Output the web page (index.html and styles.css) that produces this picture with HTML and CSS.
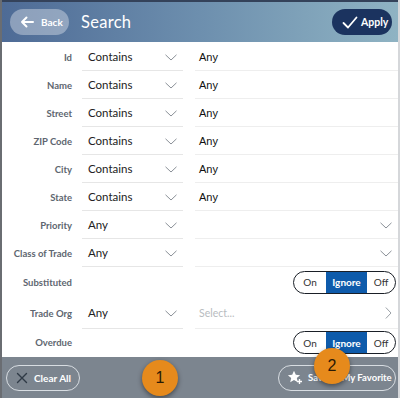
FILE: index.html
```html
<!DOCTYPE html>
<html>
<head>
<meta charset="utf-8">
<link rel="stylesheet" href="styles.css">
</head>
<body>
<div class="app">
  <header class="topbar">
    <button class="back">
      <svg width="14" height="12" viewBox="0 0 14 12"><path d="M13 6H2M6.5 1.5L2 6l4.5 4.5" fill="none" stroke="#fff" stroke-width="2" stroke-linecap="round" stroke-linejoin="round"/></svg>
      <span>Back</span>
    </button>
    <h1 class="title">Search</h1>
    <button class="apply">
      <svg width="16" height="13" viewBox="0 0 16 13"><path d="M1.5 7l4.5 4.5L14.5 1.5" fill="none" stroke="#fff" stroke-width="1.8" stroke-linecap="round" stroke-linejoin="round"/></svg>
      <span>Apply</span>
    </button>
  </header>

  <main class="form">
    <div class="row"><label>Id</label><div class="sel">Contains<svg class="chev" viewBox="0 0 12 7"><path d="M0.5 0.8L6 6 11.5 0.8"/></svg></div><div class="val">Any</div></div>
    <div class="row"><label>Name</label><div class="sel">Contains<svg class="chev" viewBox="0 0 12 7"><path d="M0.5 0.8L6 6 11.5 0.8"/></svg></div><div class="val">Any</div></div>
    <div class="row"><label>Street</label><div class="sel">Contains<svg class="chev" viewBox="0 0 12 7"><path d="M0.5 0.8L6 6 11.5 0.8"/></svg></div><div class="val">Any</div></div>
    <div class="row"><label>ZIP Code</label><div class="sel">Contains<svg class="chev" viewBox="0 0 12 7"><path d="M0.5 0.8L6 6 11.5 0.8"/></svg></div><div class="val">Any</div></div>
    <div class="row"><label>City</label><div class="sel">Contains<svg class="chev" viewBox="0 0 12 7"><path d="M0.5 0.8L6 6 11.5 0.8"/></svg></div><div class="val">Any</div></div>
    <div class="row"><label>State</label><div class="sel">Contains<svg class="chev" viewBox="0 0 12 7"><path d="M0.5 0.8L6 6 11.5 0.8"/></svg></div><div class="val">Any</div></div>
    <div class="row"><label>Priority</label><div class="sel">Any<svg class="chev" viewBox="0 0 12 7"><path d="M0.5 0.8L6 6 11.5 0.8"/></svg></div><div class="val vsel"><svg class="chev" viewBox="0 0 12 7"><path d="M0.5 0.8L6 6 11.5 0.8"/></svg></div></div>
    <div class="row"><label>Class of Trade</label><div class="sel">Any<svg class="chev" viewBox="0 0 12 7"><path d="M0.5 0.8L6 6 11.5 0.8"/></svg></div><div class="val vsel"><svg class="chev" viewBox="0 0 12 7"><path d="M0.5 0.8L6 6 11.5 0.8"/></svg></div></div>
    <div class="row trow"><label>Substituted</label><div class="spacer"></div>
      <div class="toggle"><span>On</span><span class="on">Ignore</span><span>Off</span></div></div>
    <div class="row orgrow"><label>Trade Org</label><div class="sel">Any<svg class="chev" viewBox="0 0 12 7"><path d="M0.5 0.8L6 6 11.5 0.8"/></svg></div><div class="val ph">Select...<svg class="chevr" viewBox="0 0 7 12"><path d="M0.8 0.5L6 6 0.8 11.5"/></svg></div></div>
    <div class="row trow last"><label>Overdue</label><div class="spacer"></div>
      <div class="toggle"><span>On</span><span class="on">Ignore</span><span>Off</span></div></div>
  </main>

  <footer class="bottombar">
    <button class="pill clear">
      <svg class="ico" width="12" height="12" viewBox="0 0 12 12"><path d="M1.5 1.5l9 9M10.5 1.5l-9 9" stroke="#2f3a46" stroke-width="1.4" stroke-linecap="round"/></svg>
      <span>Clear All</span>
    </button>
    <button class="pill fav">
      <svg class="ico" width="16" height="15" viewBox="0 0 16 15"><path d="M7 0.8l1.8 4 4.3.4-3.3 2.9 1 4.2L7 10.1 3.2 12.3l1-4.2L0.9 5.2l4.3-.4z" fill="#fff"/><path d="M12.5 9v5M10 11.5h5" stroke="#fff" stroke-width="1.4"/></svg>
      <span>Save as My Favorite</span>
    </button>
    <div class="badge b1">1</div>
    <div class="badge b2">2</div>
  </footer>
</div>
</body>
</html>
```

FILE: styles.css
```css
* { box-sizing: border-box; margin: 0; padding: 0; }
html, body { width: 400px; height: 398px; overflow: hidden; background: #fff; }
body { font-family: Lato, "Open Sans", sans-serif; }
.app {
  width: 400px; height: 398px; display: flex; flex-direction: column;
  border-left: 2px solid #6a6d72; border-right: 2px solid #d5d7da; position: relative;
}
.topbar {
  height: 42px; flex: none; display: flex; align-items: center; padding: 0 6px 0 8px;
  background: linear-gradient(90deg, #4e6b96 0%, #6d8fae 50%, #8fb3c3 100%);
  border-top: 2px solid #34425a;
}
button { font-family: inherit; border: none; background: none; cursor: pointer; white-space: nowrap; }
svg { flex: none; }
.back {
  height: 26px; width: 59px; border-radius: 13px; background: rgba(255,255,255,0.35);
  display: flex; align-items: center; gap: 7px; padding-left: 10px;
  color: #fff; font-size: 10px; font-weight: 700;
}
.title { font-weight: 400; font-size: 16.5px; color: #fff; margin-left: 12px; flex: 1; letter-spacing: 0.3px; }
.apply {
  height: 26px; width: 60px; border-radius: 13px; background: #1b335f;
  display: flex; align-items: center; gap: 3px; padding-left: 10px;
  color: #fff; font-size: 10.5px; font-weight: 700;
}
.form { flex: 1; display: flex; flex-direction: column; padding-top: 1px; }
.row { height: 28px; display: flex; align-items: stretch; }
.row label {
  width: 70px; flex: none; text-align: right; font-size: 9.5px; font-weight: 700; color: #5e6670;
  display: flex; align-items: center; justify-content: flex-end; white-space: nowrap;
}
.sel {
  width: 101px; flex: none; margin-left: 10px; border-bottom: 1px solid #e6e6e6;
  display: flex; align-items: center; padding-left: 6px; font-size: 11.5px; color: #222; position: relative;
}
.val {
  flex: 1; margin-left: 12px; border-bottom: 1px solid #eeeeee; display: flex; align-items: center;
  padding-left: 4px; font-family: "Liberation Sans", Arial, sans-serif; font-size: 11px; color: #111; position: relative;
}
.vsel { justify-content: flex-end; padding-right: 6px; }
.ph { justify-content: space-between; color: #b8bcc0; font-family: Lato, sans-serif; font-size: 10.5px; padding-right: 6px; }
.chev {
  position: absolute; right: 6px; top: 50%; width: 12px; height: 7px; margin-top: -3px;
  fill: none; stroke: #8a9097; stroke-width: 1;
}
.vsel .chev { right: 6px; }
.chevr { width: 7px; height: 12px; fill: none; stroke: #9aa0a6; stroke-width: 1; }
.trow { height: 30px; align-items: center; }
.trow label { align-self: stretch; }
.orgrow { height: 32px; }
.last { height: 27px; }
.spacer { flex: 1; }
.toggle {
  width: 103px; height: 23px; border: 1.5px solid #1a1f27; border-radius: 12px; overflow: hidden;
  display: flex; font-size: 10px; font-weight: 700; color: #333; margin-right: 2px;
}
.toggle span { flex: 1; display: flex; align-items: center; justify-content: center; }
.toggle span:first-child { flex: 0 0 32px; font-weight: 400; }
.toggle span:last-child { flex: 0 0 28px; font-weight: 400; }
.toggle .on { background: #0e5bab; color: #fff; }
.bottombar {
  height: 41px; flex: none; background: #7c858f; display: flex; align-items: center;
  justify-content: space-between; padding: 0 2px 0 4px; position: relative;
}
.pill {
  height: 26px; border: 1.5px solid #d8dde2; border-radius: 13px; display: flex; align-items: center;
  gap: 6px; padding: 0 10px 0 9px; color: #fff; font-size: 10px; font-weight: 700;
}
.clear { width: 74px; }
.fav { width: 118px; padding-left: 8px; gap: 5px; font-size: 9.5px; overflow: hidden; }
.badge {
  position: absolute; width: 36px; height: 36px; border-radius: 50%;
  background: #e68a1c; color: #2a1a05; font-size: 16px; display: flex; align-items: center; justify-content: center;
  box-shadow: 0 2px 5px rgba(0,0,0,0.45); font-family: "Liberation Sans", Arial, sans-serif;
}
.b1 { left: 140px; top: 3px; }
.b2 { left: 312px; top: -9px; }
```
